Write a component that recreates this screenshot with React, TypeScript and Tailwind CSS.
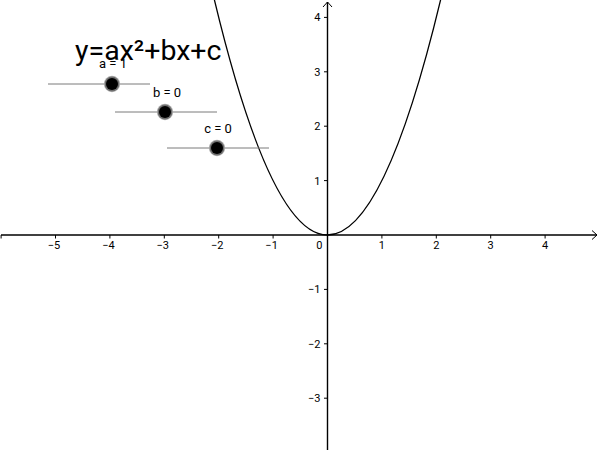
import React from 'react';

// 座標系の設定
const U = 54.4;
const OX = 327.5;
const OY = 235;
const px = (x: number) => OX + x * U;
const py = (y: number) => OY - y * U;

const xTicks = [-6, -5, -4, -3, -2, -1, 1, 2, 3, 4];
const yTicks = [-3, -2, -1, 1, 2, 3, 4];

const sliders = [
  { label: 'a = 1', x1: 48, x2: 150, y: 84, pt: 112, lx: 113, ly: 68 },
  { label: 'b = 0', x1: 115, x2: 217, y: 112, pt: 165, lx: 167, ly: 97 },
  { label: 'c = 0', x1: 167, x2: 269, y: 148, pt: 217, lx: 218, ly: 133 },
];

const App: React.FC = () => {
  const x0 = -2.15;
  const x1 = 2.15;
  const curve = `M ${px(x0)} ${py(x0 * x0)} Q ${px(0)} ${py(-x0 * x0)} ${px(x1)} ${py(x1 * x1)}`;

  return (
    <div className="w-[600px] h-[450px] bg-white overflow-hidden">
      <svg width="600" height="450" viewBox="0 0 600 450" className="block" style={{ fontFamily: 'Roboto, "Liberation Sans", sans-serif' }}>
        {/* x軸 */}
        <line x1="1" y1={OY} x2="597" y2={OY} stroke="#000" strokeWidth="1.4" />
        <path d={`M 592 ${OY - 4.5} L 597 ${OY} L 592 ${OY + 4.5}`} fill="none" stroke="#000" strokeWidth="1" />
        {/* y軸 */}
        <line x1={OX} y1="450" x2={OX} y2="2" stroke="#000" strokeWidth="1.4" />
        <path d={`M ${OX - 4.5} 7 L ${OX} 2 L ${OX + 4.5} 7`} fill="none" stroke="#000" strokeWidth="1" />

        {xTicks.map((t) => (
          <g key={`x${t}`}>
            <line x1={px(t)} y1={OY} x2={px(t)} y2={OY + 3.5} stroke="#000" strokeWidth="1" />
            {t > -6 && (
              <text x={px(t) + (t < 0 ? -1.5 : 0)} y={OY + 14} fontSize="11" textAnchor="middle" fill="#000">
                {t < 0 ? `\u2212${-t}` : t}
              </text>
            )}
          </g>
        ))}
        {yTicks.map((t) => (
          <g key={`y${t}`}>
            <line x1={OX - 3.5} y1={py(t)} x2={OX} y2={py(t)} stroke="#000" strokeWidth="1" />
            <text x={OX - 7} y={py(t) + 4} fontSize="11" textAnchor="end" fill="#000">
              {t < 0 ? `\u2212${-t}` : t}
            </text>
          </g>
        ))}
        <text x={OX - 5} y={OY + 14} fontSize="11" textAnchor="end" fill="#000">0</text>

        {/* 放物線 */}
        <path d={curve} fill="none" stroke="#000" strokeWidth="1.3" />

        {/* タイトル */}
        <text x="75" y="60" fontSize="28.5" fill="#000">y=ax²+bx+c</text>

        {/* スライダー */}
        {sliders.map((s) => (
          <g key={s.label}>
            <line x1={s.x1} y1={s.y} x2={s.x2} y2={s.y} stroke="#7a7a7a" strokeWidth="1" />
            <text x={s.lx} y={s.ly} fontSize="13" textAnchor="middle" fill="#000">{s.label}</text>
            <circle cx={s.pt} cy={s.y} r="8.2" fill="#b5b5b5" />
            <circle cx={s.pt} cy={s.y} r="7.4" fill="#6e6e6e" />
            <circle cx={s.pt} cy={s.y} r="6" fill="#000" />
          </g>
        ))}
      </svg>
    </div>
  );
};

export default App;
